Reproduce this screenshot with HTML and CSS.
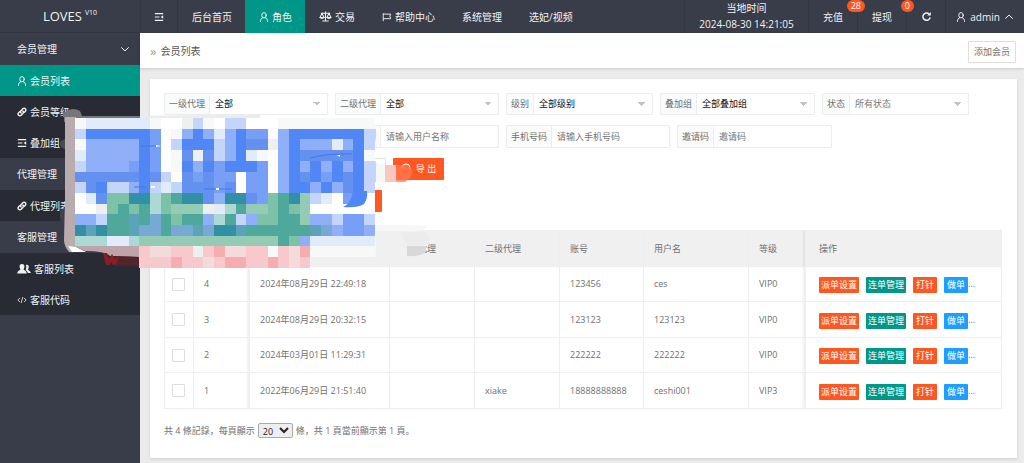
FILE: index.html
```html
<!DOCTYPE html>
<html lang="zh-CN">
<head>
<meta charset="utf-8">
<meta name="viewport" content="width=device-width, initial-scale=1">
<title>会员列表</title>
<link rel="stylesheet" href="styles.css">
</head>
<body>
<svg class="defs" aria-hidden="true">
  <symbol id="i-user" viewBox="0 0 12 12"><g fill="none" stroke="currentColor" stroke-width="1.200" stroke-linecap="round"><ellipse cx="6" cy="3.900" rx="2.700" ry="3.200"/><path d="M4.400 6.800C2.400 7.600 1.800 9 1.800 11.300M7.600 6.800C9.600 7.600 10.200 9 10.200 11.300"/></g></symbol>
  <symbol id="i-link" viewBox="0 0 12 12"><g fill="none" stroke="currentColor" stroke-width="1.700" stroke-linecap="round"><path d="M5 7.200a2.200 2.200 0 0 1 0-3l2-2a2.100 2.100 0 0 1 3 3L8.800 6.400"/><path d="M7 4.800a2.200 2.200 0 0 1 0 3l-2 2a2.100 2.100 0 0 1-3-3l1.200-1.200"/></g></symbol>
  <symbol id="i-list" viewBox="0 0 12 12"><g fill="none" stroke="currentColor" stroke-width="1.400"><path d="M1 2h10M1 6h5.500M1 10h10"/></g><path d="M11 4v4L8 6z" fill="currentColor"/></symbol>
  <symbol id="i-users" viewBox="0 0 14 12"><g fill="currentColor"><path d="M9 2c2-.6 3 .7 2.700 2.500-.1.900-.5 1.300-.7 1.900 0 .9 2.700 1.300 2.800 3.600h-3c-.2-1.500-1.200-2.200-2.200-2.700.7-1.600 1-3.600.4-5.300z"/><path d="M5 1c2 0 2.700 1.400 2.400 3.100-.1 1-.6 1.500-.8 2.200.1 1.100 3.100 1.400 3.100 4.200H.3c0-2.800 3-3.100 3.100-4.200-.2-.7-.7-1.200-.8-2.200C2.300 2.400 3 1 5 1z"/></g></symbol>
  <symbol id="i-code" viewBox="0 0 12 12"><path d="M3.500 3.500L1 6l2.500 2.500M8.500 3.500L11 6 8.500 8.500M7 2.500l-2 7" fill="none" stroke="currentColor"/></symbol>
  <symbol id="i-scale" viewBox="0 0 14 12"><g fill="none" stroke="currentColor" stroke-width="1.100"><path d="M7 .5v10M3.500 10.800h7M2 2.500h10M3.200 2.500L1 7h4.500zM10.800 2.500L8.500 7H13z"/></g><path d="M.7 6.800h5c-.4 2.500-4.600 2.500-5 0zM8.300 6.800h5c-.4 2.500-4.600 2.500-5 0z" fill="currentColor"/></symbol>
  <symbol id="i-flag" viewBox="0 0 12 12"><path d="M1.500 1.500V11M1.500 2.500h9L9.300 5l1.200 3h-9" fill="none" stroke="currentColor" stroke-width="1.100"/></symbol>
  <symbol id="i-refresh" viewBox="0 0 12 12"><path d="M10 7A4 4 0 1 1 8.700 3.100" fill="none" stroke="currentColor" stroke-width="1.600"/><path d="M10.700 1v4H6.700z" fill="currentColor"/></symbol>
  <symbol id="i-down" viewBox="0 0 12 12"><path d="M1.500 4L6 8.300 10.500 4" fill="none" stroke="currentColor" stroke-width="1.200"/></symbol>
  <symbol id="i-up" viewBox="0 0 12 12"><path d="M1.500 8L6 3.700 10.500 8" fill="none" stroke="currentColor" stroke-width="1.200"/></symbol>
</svg>

<div class="app">
  <aside class="sidebar">
    <a class="logo" href="#">LOVES <sup>V10</sup></a>
    <nav class="menu">
      <a class="menu-head" href="#">会员管理<svg class="icon chevron"><use href="#i-down"/></svg></a>
      <a class="menu-item active" href="#"><svg class="icon"><use href="#i-user"/></svg>会员列表</a>
      <a class="menu-item" href="#"><svg class="icon"><use href="#i-link"/></svg>会员等级</a>
      <a class="menu-item" href="#"><svg class="icon"><use href="#i-list"/></svg>叠加组</a>
      <a class="menu-head" href="#">代理管理</a>
      <a class="menu-item" href="#"><svg class="icon"><use href="#i-link"/></svg>代理列表</a>
      <a class="menu-head" href="#">客服管理</a>
      <a class="menu-item" href="#"><svg class="icon wide"><use href="#i-users"/></svg>客服列表</a>
      <a class="menu-item" href="#"><svg class="icon"><use href="#i-code"/></svg>客服代码</a>
    </nav>
  </aside>

  <div class="main">
    <header class="topbar">
      <button class="toggle" type="button" aria-label="菜单"><svg class="icon"><use href="#i-list"/></svg></button>
      <nav class="topnav">
        <a href="#">后台首页</a>
        <a class="active" href="#"><svg class="icon"><use href="#i-user"/></svg>角色</a>
        <a href="#"><svg class="icon scale"><use href="#i-scale"/></svg>交易</a>
        <a href="#"><svg class="icon"><use href="#i-flag"/></svg>帮助中心</a>
        <a href="#">系统管理</a>
        <a href="#">选妃/视频</a>
      </nav>
      <div class="tools">
        <div class="clock"><span>当地时间</span><time>2024-08-30 14:21:05</time></div>
        <a class="tool" href="#">充值<span class="badge">28</span></a>
        <a class="tool" href="#">提现<span class="badge">0</span></a>
        <button class="tool refresh" type="button" aria-label="刷新"><svg class="icon"><use href="#i-refresh"/></svg></button>
        <a class="tool account" href="#"><svg class="icon"><use href="#i-user"/></svg>admin<svg class="icon"><use href="#i-up"/></svg></a>
      </div>
    </header>

    <div class="titlebar">
      <h1><span class="crumb">»</span>会员列表</h1>
      <button class="add" type="button">添加会员</button>
    </div>

    <main class="card">
      <form class="filters">
        <div class="filter-row">
          <div class="field w164"><label for="a1">一级代理</label><select id="a1"><option>全部</option></select></div>
          <div class="field w164"><label for="a2">二级代理</label><select id="a2"><option>全部</option></select></div>
          <div class="field w147"><label for="lv">级别</label><select id="lv"><option>全部级别</option></select></div>
          <div class="field w155"><label for="gp">叠加组</label><select id="gp"><option>全部叠加组</option></select></div>
          <div class="field w147"><label for="st">状态</label><select id="st" class="muted"><option>所有状态</option></select></div>
        </div>
        <div class="filter-row second">
          <div class="field w164"><span class="label-blank"></span><input type="text" aria-label="用户名称" placeholder="请输入用户名称"></div>
          <div class="field w164"><label for="ph">手机号码</label><input id="ph" type="text" placeholder="请输入手机号码"></div>
          <div class="field w155"><label for="iv">邀请码</label><input id="iv" type="text" placeholder="邀请码"></div>
        </div>
        <div class="filter-row actions">
          <button class="search" type="button" aria-label="搜索"></button>
          <button class="export" type="button"><svg class="icon" viewBox="0 0 10 14"><path d="M1 6a4 4 0 1 1 8 0M8 5.500l1.500 1.500" fill="none" stroke="currentColor"/></svg>导 出</button>
        </div>
        <div class="filter-row batch"><button class="bulk" type="button" aria-label="批量操作"></button></div>
      </form>

      <table class="grid">
        <colgroup><col class="c-check"><col class="c-id"><col class="c-date"><col class="c-agent"><col class="c-agent"><col class="c-account"><col class="c-name"><col class="c-level"><col></colgroup>
        <thead><tr><th></th><th class="edge"></th><th></th><th>一级代理</th><th>二级代理</th><th>账号</th><th>用户名</th><th class="edge">等级</th><th>操作</th></tr></thead>
        <tbody>
          <tr><td><input type="checkbox" aria-label="选择 4"></td><td class="edge">4</td><td>2024年08月29日 22:49:18</td><td></td><td></td><td>123456</td><td>ces</td><td class="edge">VIP0</td><td><div class="ops"><button type="button" class="red">派单设置</button><button type="button" class="green">连单管理</button><button type="button" class="red">打针</button><button type="button" class="blue">做单</button><span>...</span></div></td></tr>
          <tr><td><input type="checkbox" aria-label="选择 3"></td><td class="edge">3</td><td>2024年08月29日 20:32:15</td><td></td><td></td><td>123123</td><td>123123</td><td class="edge">VIP0</td><td><div class="ops"><button type="button" class="red">派单设置</button><button type="button" class="green">连单管理</button><button type="button" class="red">打针</button><button type="button" class="blue">做单</button><span>...</span></div></td></tr>
          <tr><td><input type="checkbox" aria-label="选择 2"></td><td class="edge">2</td><td>2024年03月01日 11:29:31</td><td></td><td></td><td>222222</td><td>222222</td><td class="edge">VIP0</td><td><div class="ops"><button type="button" class="red">派单设置</button><button type="button" class="green">连单管理</button><button type="button" class="red">打针</button><button type="button" class="blue">做单</button><span>...</span></div></td></tr>
          <tr><td><input type="checkbox" aria-label="选择 1"></td><td class="edge">1</td><td>2022年06月29日 21:51:40</td><td></td><td>xiake</td><td>18888888888</td><td>ceshi001</td><td class="edge">VIP3</td><td><div class="ops"><button type="button" class="red">派单设置</button><button type="button" class="green">连单管理</button><button type="button" class="red">打针</button><button type="button" class="blue">做单</button><span>...</span></div></td></tr>
        </tbody>
      </table>

      <div class="pager"><label for="size">共 4 條記錄，每頁顯示</label><select id="size"><option>20</option></select><span>條，共 1 頁當前顯示第 1 頁。</span></div>
    </main>
  </div>
</div>

<svg class="mosaic" viewBox="60 100 400 175" aria-hidden="true">
  <path d="M64 122V113q8-7 16-2l2 5h58v2H75v5z" fill="#77767a"/>
  <path d="M140 116l120-2v4H140z" fill="#ececec"/>
  <path d="M65 139q-5 1-5 5t5 5z" fill="#4a4b53"/>
  <path d="M60 210l6-2v16q-4 0-6-5z" fill="#3f4048"/>
  <path d="M65 117h11v130l10 5h-17q-5-6-5-12l1-40z" fill="#b9acaf"/>
  <path d="M68 246l4 6h14l-10-5z" fill="#fff"/>
  <path d="M76 243h64v14l-30-1q-5-5-25-5l-9-4z" fill="#bfa5a9"/>
  <path d="M112 256l28 1v9h-24z" fill="#54242b"/>
  <path d="M103 253h4l2 6 3-5 3 5 4-3-3 9h-3l-2-3-2 3h-3z" fill="#8c1d24"/>
  <path d="M374 225q30-1 54 1-3 5-20 7l-4 22H374z" fill="#f6f7f7"/>
  <path d="M376 231h28q20 1 24 9v6h-20v10H376z" fill="#f0f0f0"/>
  <path d="M401 233q18-3 25 0 4 4 3 12h-22z" fill="#ececec"/>
  <path d="M407 246h19v6q-6 5-19 4z" fill="#d8d8d8"/>
  <path d="M374 127q4 2 1 16h-1zM374 160q5 3 4 22h-4z" fill="#c4d6fa"/>
  <path d="M376 182v-18h9v18z" fill="#f6f7f7"/>
  <g id="cells"></g>
  <path d="M343 207q8-3 10-16h14q1 8-3 13-6 4-21 3z" fill="#5087f5"/>
  <path d="M310 158q18-5 42-4M140 146h18M134 187h12M204 189h28" fill="none" stroke="#3f79ee"/>
  <path d="M156 145l5 1-5 1zM151 186h4v2h-4zM216 188h3v2h-3zM337 155h3v2z" fill="#fff"/>
  <path d="M385 165h11v17h-11z" fill="#fac6c0"/>
  <path d="M396 165h10q6 1 6 7t-7 10h-9z" fill="#ff7a52" fill-opacity=".75"/>
</svg>
<script src="mosaic.js"></script>
</body>
</html>
```
FILE: mosaic.js
```js
// Censor patch: one letter per square, each naming a tint.
const tints = {
  B: '#5087f5', b: '#779ff6', m: '#6490f0', l: '#8fb0f8', p: '#c3d5fa',
  w: '#ffffff', f: '#f7f9f9', e: '#e2ebfa', g: '#eeeff0',
  G: '#4ea89b', h: '#7dc2a6', H: '#94cbb5', t: '#3190a5', s: '#5ca2b8',
  q: '#77a9d4', a: '#add9d4', k: '#f7c9cc', K: '#f5adb0', n: '#f4dadb'
};
const rows = [
  'feeeeeefwwgpfwppwwwfffffffff',
  'pBBBBBBbwflBlelBbbwlBBBBBBBp',
  'flllllBbwpBBBplBmmglBlllelBp',
  'elllllBbwfmgmplBefwlBmmmmmBf',
  'pllllbBbwfBlBbBBBbwlBlBlBlBp',
  'mmmmmmBmpwmbmbbwbbwlBmBbBmBp',
  'pmBpplBpepmmmbmwbbwlBBlBlmBp',
  'wemhhttahGttmlttmbhGtHpewbBw',
  'wwghGhGahHHHgeaGHHhGhHwwwwww',
  'llpGGsGqGhGGlaGplhhGGHllpbbp',
  'tstGGsqqGqqsqttsGGGGGGsqlbbl',
  'aaaeeaHHHHHHHHHHHHHGhleeeeee',
  '......knnkkgkKnnkkfknKffffff',
  '......kkkKkknkKKkkKknk'
];
const cells = document.getElementById('cells');
const edge = (start, i) => start + Math.round(i * 10.7);
rows.forEach((row, y) => [...row].forEach((key, x) => {
  if (key === '.') return;
  const r = document.createElementNS('http://www.w3.org/2000/svg', 'rect');
  r.setAttribute('x', edge(75, x));
  r.setAttribute('y', edge(118, y));
  r.setAttribute('width', edge(75, x + 1) - edge(75, x));
  r.setAttribute('height', edge(118, y + 1) - edge(118, y));
  r.setAttribute('fill', tints[key]);
  cells.append(r);
}));
```
FILE: styles.css
```css
* { box-sizing: border-box; }
body {
  margin: 0;
  background: #ebebeb;
  color: #707070;
  font: 9px/14px "Open Sans", "Noto Sans CJK SC", sans-serif;
}
a { color: inherit; text-decoration: none; }
button, input, select { font: inherit; color: inherit; margin: 0; border-radius: 0; }
button { border: 0; padding: 0; background: none; cursor: pointer; white-space: nowrap; }
.defs { position: absolute; width: 0; height: 0; }
.icon { width: 10px; height: 10px; flex: none; }
.icon.wide { width: 14px; height: 12px; }
.icon.scale { width: 13px; height: 11px; }

.app { display: flex; min-height: 100vh; }
.sidebar { flex: none; width: 140px; background: #393d49; color: #f2f2f2; font-size: 10px; }
.logo {
  display: flex; justify-content: center; gap: 3px; height: 33px; line-height: 32px;
  font-size: 13px; border-bottom: 1px solid #32353f;
}
.logo sup { font-size: 7px; line-height: 26px; vertical-align: top; }
.menu { display: flex; flex-direction: column; }
.menu-head { display: flex; align-items: center; justify-content: space-between; height: 32px; padding: 0 10px 0 17px; }
.menu-item { display: flex; align-items: center; gap: 3px; height: 31px; padding-left: 17px; background: #282b33; }
.menu-item.active { background: #009688; }

.main { flex: 1; min-width: 0; }
.topbar { display: flex; height: 33px; background: #393d49; color: #f2f2f2; font-size: 10px; }
.toggle { width: 38px; border: solid #33363f; border-width: 0 1px; display: flex; align-items: center; justify-content: center; }
.topnav { display: flex; }
.topnav a { display: flex; align-items: center; gap: 3px; padding: 0 13px 0 14px; white-space: nowrap; }
.topnav .active { background: #009688; }
.tools { display: flex; margin-left: auto; }
.clock { display: flex; flex-direction: column; align-items: center; width: 125px; line-height: 16px; border: solid #33363f; border-width: 0 1px; }
.tool { position: relative; display: flex; align-items: center; justify-content: center; width: 49px; border-right: 1px solid #33363f; }
.refresh { width: 39px; }
.refresh .icon { width: 11px; height: 11px; }
.account { width: 78px; gap: 4px; border: 0; }
.badge {
  position: absolute; top: 0; right: -8px; min-width: 13px; padding: 0 4px;
  border-radius: 8px; background: #ff5722; color: #fff; font-size: 9px; line-height: 12px; text-align: center;
}

.titlebar {
  display: flex; align-items: center; justify-content: space-between; height: 35px;
  padding: 0 8px 0 10px; background: #fff; box-shadow: 0 1px 3px rgba(0, 0, 0, .15);
}
.titlebar h1 { display: flex; gap: 4px; margin: 0; color: #555; font-size: 10px; font-weight: 400; }
.crumb { color: #999; font-size: 13px; }
.add { height: 22px; margin-top: 3px; padding: 0 5px; border: 1px solid #dedede; border-radius: 1px; background: #fff; }

.card { margin: 11px 7px 6px 10px; padding: 14px 15px 20px 14px; background: #fff; box-shadow: 0 1px 3px rgba(0, 0, 0, .12); }
.filter-row { display: flex; gap: 7px; height: 22px; margin-bottom: 10px; }
.filter-row.second { height: 23px; padding-left: 171px; }
.filter-row.actions { padding-left: 202px; }
.filter-row.batch { padding-left: 202px; margin: 0 0 18px; }
.field { display: flex; border: 1px solid #ececec; border-radius: 1px; }
.w164 { width: 164px; }
.w155 { width: 155px; }
.w147 { width: 147px; }
.field label, .label-blank { flex: none; display: flex; align-items: center; padding: 0 4px; border-right: 1px solid #ececec; background: #fafbfb; }
.label-blank { width: 45px; }
.field input, .field select { flex: 1; min-width: 0; width: 0; border: 0; padding: 0 5px; background: #fff; outline: 0; }
.field input::placeholder { color: #757575; opacity: 1; }
.field select {
  appearance: none; color: #111;
  background-image: linear-gradient(to bottom left, #c2c2c2 50%, transparent 50%), linear-gradient(to bottom right, #c2c2c2 50%, transparent 50%);
  background-position: right 10px center, right 6px center;
  background-size: 4px 4px;
  background-repeat: no-repeat;
}
.field select.muted { color: #777; }
.search { width: 20px; border: 1px solid #e2e2e2; }
.export { display: flex; align-items: center; justify-content: center; gap: 5px; width: 51px; border-radius: 1px; background: #ff5722; color: #fff; }
.export .icon { height: 14px; }
.bulk { width: 16px; background: #ff5722; border-radius: 1px; }

.grid { width: 100%; table-layout: fixed; border-collapse: collapse; border: 1px solid #ebebeb; }
.c-check { width: 29px; }
.c-id { width: 56px; }
.c-date { width: 140px; }
.c-agent { width: 85px; }
.c-account { width: 84px; }
.c-name { width: 105px; }
.c-level { width: 57px; }
.grid th, .grid td { padding: 0 10px; border: 1px solid #eee; font-weight: 400; text-align: left; white-space: nowrap; }
.grid th { height: 36px; background: #f0f0f0; }
.grid td { height: 35px; }
.grid tr:nth-child(even) td { height: 36px; }
.grid .edge { box-shadow: inset -3px 0 2px -1px rgba(0, 0, 0, .06); }
.grid td:first-child { padding: 0 7px; }
.grid th:last-child, .grid td:last-child { padding-left: 13px; }
.grid input { display: block; appearance: none; width: 13px; height: 13px; border: 1px solid #ddd; border-radius: 1px; background: #fff; }
.ops { display: flex; gap: 7px; padding-top: 2px; }
.ops button { height: 16px; padding: 0 2px; border-radius: 1px; color: #fff; min-width: 24px; }
.ops span { margin-left: -7px; }
.red { background: #ff5722; }
.green { background: #009688; }
.blue { background: #1e9fff; }

.pager { display: flex; align-items: center; gap: 3px; margin-top: 14px; }
.pager select { width: 35px; height: 15px; padding: 0; border: 1px solid #aaa; border-radius: 2px; background: #eee; color: #222; }

.mosaic { position: absolute; left: 60px; top: 100px; width: 400px; height: 175px; pointer-events: none; }
```
